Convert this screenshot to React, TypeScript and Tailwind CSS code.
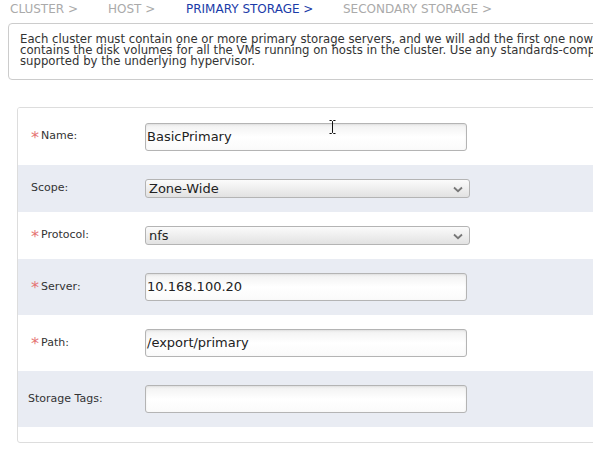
import React from 'react';

const font = { fontFamily: '"DejaVu Sans", Verdana, sans-serif' };

const Chevron = () => (
  <svg width="10" height="7" viewBox="0 0 10 7" className="absolute right-[6px] top-[6px]">
    <path d="M1 1.5 L5 5.2 L9 1.5" fill="none" stroke="#777" strokeWidth="1.8" />
  </svg>
);

const Label: React.FC<{ text: string; required?: boolean; shift?: boolean }> = ({ text, required, shift }) => (
  <div className={`w-[127px] shrink-0 ${shift ? 'pl-[10px]' : 'pl-[13px]'} text-[11px] text-[#333] flex items-center`}>
    {required && <span className="text-[#e57373] text-[16px] mr-[2px] leading-none mt-[2px]">*</span>}
    <span>{text}</span>
  </div>
);

const TextInput: React.FC<{ value: string }> = ({ value }) => (
  <div className="w-[322px] h-[28px] rounded-[3px] border border-[#b4b4b4] bg-gradient-to-b from-[#f1f1f1] via-white to-[#fafafa] flex items-center pl-[1px] text-[13px] text-[#222] shadow-[inset_0_1px_2px_rgba(0,0,0,0.08)]">
    {value}
  </div>
);

const Select: React.FC<{ value: string }> = ({ value }) => (
  <div className="relative w-[325px] h-[19px] rounded-[3px] border border-[#b4b4b4] bg-gradient-to-b from-[#fbfbfb] to-[#e2e2e2] flex items-center pl-[3px] text-[13px] text-[#222] leading-none">
    {value}
    <Chevron />
  </div>
);

const Row: React.FC<{ gray?: boolean; h: number; children: React.ReactNode }> = ({ gray, h, children }) => (
  <div className={`flex items-center ${gray ? 'bg-[#e9ecf3]' : 'bg-white'}`} style={{ height: h }}>
    {children}
  </div>
);

export default function App() {
  return (
    <div className="w-[593px] h-[467px] overflow-hidden bg-white relative" style={font}>
      <div className="flex h-[17px] items-center text-[12px] text-[#aaaaaa] pl-[10px] whitespace-nowrap">
        <span className="w-[98px]">CLUSTER &gt;</span>
        <span className="w-[78px]">HOST &gt;</span>
        <span className="w-[157px] text-[#1a3ba8]">PRIMARY STORAGE &gt;</span>
        <span>SECONDARY STORAGE &gt;</span>
      </div>
      <div className="mt-[6px] ml-[8px] w-[700px] h-[57px] border border-[#cccccc] rounded-[4px] pl-[11px] pt-[10px] text-[11.7px] leading-[11px] text-[#333] whitespace-nowrap">
        <div>Each cluster must contain one or more primary storage servers, and we will add the first one now. Primary storage</div>
        <div>contains the disk volumes for all the VMs running on hosts in the cluster. Use any standards-compliant protocol that is</div>
        <div>supported by the underlying hypervisor.</div>
      </div>
      <div className="mt-[27px] ml-[17px] w-[700px] h-[336px] border border-[#dddddd] rounded-[3px] overflow-hidden">
        <Row h={57}>
          <Label text="Name:" required />
          <TextInput value="BasicPrimary" />
        </Row>
        <Row gray h={47}>
          <Label text="Scope:" />
          <Select value="Zone-Wide" />
        </Row>
        <Row h={47}>
          <Label text="Protocol:" required />
          <Select value="nfs" />
        </Row>
        <Row gray h={56}>
          <Label text="Server:" required />
          <TextInput value="10.168.100.20" />
        </Row>
        <Row h={56}>
          <Label text="Path:" required />
          <TextInput value="/export/primary" />
        </Row>
        <Row gray h={56}>
          <Label text="Storage Tags:" shift />
          <TextInput value="" />
        </Row>
      </div>
      <svg width="7" height="14" viewBox="0 0 7 14" className="absolute left-[329px] top-[120px]">
        <path d="M0.5 0.5 H2.5 L3.5 1.5 L4.5 0.5 H6.5 M3.5 1.5 V12.5 M0.5 13.5 H2.5 L3.5 12.5 L4.5 13.5 H6.5" fill="none" stroke="#111" strokeWidth="1" />
      </svg>
    </div>
  );
}
